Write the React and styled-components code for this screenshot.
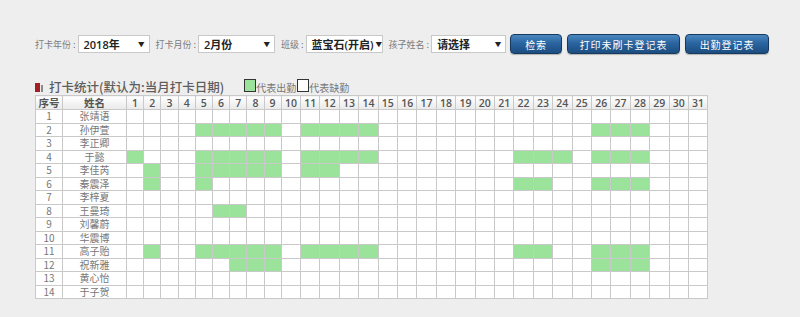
import React from 'react';
import styled, { createGlobalStyle } from 'styled-components';

const GlobalStyle = createGlobalStyle`
  html, body {
    margin: 0;
    padding: 0;
    background: #eeeeee;
  }
  body {
    font-family: "Noto Sans CJK SC", "Open Sans", sans-serif;
  }
`;

const Page = styled.div`
  width: 800px;
  height: 317px;
  box-sizing: border-box;
  padding: 34px 0 0 35px;
  background: #eeeeee;
  overflow: hidden;
`;

const Toolbar = styled.div`
  display: flex;
  align-items: center;
  height: 20px;
`;

const FieldLabel = styled.span`
  font-size: 9px;
  color: #7a7a7a;
  margin: 0 2px 0 ${p => p.first ? 0 : 6}px;
  white-space: nowrap;
`;

const SelectBox = styled.div`
  width: ${p => p.w}px;
  height: 18px;
  box-sizing: border-box;
  border: 1px solid #c8c8c8;
  background: #fff;
  display: flex;
  align-items: center;
  justify-content: space-between;
  padding: 0 4px 0 5px;
  font-family: "Open Sans", "Noto Sans CJK SC", sans-serif;
  font-size: 11px;
  font-weight: 600;
  color: #222;
  white-space: nowrap;
  overflow: hidden;
`;

const Arrow = styled.span`
  font-size: 6.5px;
  color: #222;
  margin-left: 2px;
`;

const Button = styled.button`
  width: ${p => p.w}px;
  height: 20px;
  margin-left: ${p => p.ml}px;
  box-sizing: border-box;
  border: 1px solid #163a5e;
  border-radius: 4px;
  background: linear-gradient(#4b87bf 0%, #2a65a0 45%, #1c4d80 100%);
  box-shadow: 0 1px 1px rgba(0, 0, 0, 0.25);
  color: #fff;
  font-family: "Noto Sans CJK SC", sans-serif;
  font-size: 10px;
  letter-spacing: 1px;
  padding: 0;
  white-space: nowrap;
  cursor: pointer;
`;

const TitleRow = styled.div`
  display: flex;
  align-items: center;
  margin-top: 25px;
  height: 16px;
`;

const Marker = styled.span`
  display: inline-block;
  width: 5px;
  height: 9px;
  background: #a31f24;
  margin-right: 1px;
  margin-top: 1px;
`;

const MarkerBar = styled.span`
  display: inline-block;
  width: 2px;
  height: 7px;
  background: #8a8a8a;
  margin-right: 6px;
  margin-top: 2px;
`;

const Title = styled.span`
  font-size: 12.5px;
  color: #5e5e5e;
  font-weight: 500;
  white-space: nowrap;
  margin-right: 20px;
  margin-top: -2px;
`;

const LegendBox = styled.span`
  display: inline-block;
  width: 10px;
  height: 11px;
  border: 1px solid #333;
  background: ${p => p.on ? '#9be39a' : '#fff'};
  margin-top: -4px;
`;

const LegendText = styled.span`
  font-size: 10px;
  color: #777;
  margin-right: 1px;
  white-space: nowrap;
`;

const Table = styled.table`
  border-collapse: collapse;
  table-layout: fixed;
  width: 673px;
  background: #fff;
`;

const Th = styled.th`
  height: 13px;
  padding: 0;
  border: 1px solid #c9c9c9;
  background: linear-gradient(#ffffff, #e9e9e9);
  font-family: "Open Sans", "Noto Sans CJK SC", sans-serif;
  font-size: 10.5px;
  font-weight: 600;
  color: #555;
  text-align: center;
  line-height: 12px;
`;

const Td = styled.td`
  height: 12.5px;
  padding: 0;
  border: 1px solid #c9c9c9;
  background: ${p => p.on ? '#9be39a' : '#fff'};
  font-size: 10px;
  color: #777;
  text-align: center;
  line-height: 12px;
`;

const students = [
  ['张靖语', []],
  ['孙伊萱', [5, 6, 7, 8, 9, 11, 12, 13, 14, 26, 27, 28]],
  ['李正卿', []],
  ['于懿', [1, 5, 6, 7, 8, 9, 11, 12, 13, 14, 22, 23, 24, 26, 27, 28]],
  ['李佳芮', [2, 5, 6, 7, 8, 9, 11, 12]],
  ['秦震泽', [2, 5, 22, 23, 26, 27, 28]],
  ['李梓夏', []],
  ['王曼琦', [6, 7]],
  ['刘馨蔚', []],
  ['华震博', []],
  ['高子贻', [2, 5, 6, 7, 8, 9, 11, 12, 13, 14, 22, 23, 26, 27, 28]],
  ['祝新雅', [7, 8, 9, 26, 27, 28]],
  ['黄心怡', []],
  ['于子贺', []],
];

const days = Array.from({ length: 31 }, (_, i) => i + 1);

export default function App() {
  return (
    <Page>
      <GlobalStyle />
      <Toolbar>
        <FieldLabel first>打卡年份 :</FieldLabel>
        <SelectBox w={72}><span>2018年</span><Arrow>▼</Arrow></SelectBox>
        <FieldLabel>打卡月份 :</FieldLabel>
        <SelectBox w={77}><span>2月份</span><Arrow>▼</Arrow></SelectBox>
        <FieldLabel>班级 :</FieldLabel>
        <SelectBox w={77}><span>蓝宝石(开启)</span><Arrow>▼</Arrow></SelectBox>
        <FieldLabel>孩子姓名 :</FieldLabel>
        <SelectBox w={75}><span>请选择</span><Arrow>▼</Arrow></SelectBox>
        <Button w={52} ml={4}>检索</Button>
        <Button w={113} ml={5}>打印未刷卡登记表</Button>
        <Button w={84} ml={5}>出勤登记表</Button>
      </Toolbar>

      <TitleRow>
        <Marker />
        <MarkerBar />
        <Title>打卡统计(默认为:当月打卡日期)</Title>
        <LegendBox on />
        <LegendText>代表出勤</LegendText>
        <LegendBox />
        <LegendText>代表缺勤</LegendText>
      </TitleRow>

      <Table>
        <colgroup>
          <col style={{ width: 27 }} />
          <col style={{ width: 64 }} />
          {days.map(d => (
            <col key={d} style={{ width: d < 10 ? 17.2 : 19.4 }} />
          ))}
        </colgroup>
        <thead>
          <tr>
            <Th>序号</Th>
            <Th>姓名</Th>
            {days.map(d => <Th key={d}>{d}</Th>)}
          </tr>
        </thead>
        <tbody>
          {students.map(([name, present], i) => (
            <tr key={name}>
              <Td>{i + 1}</Td>
              <Td>{name}</Td>
              {days.map(d => <Td key={d} on={present.includes(d)} />)}
            </tr>
          ))}
        </tbody>
      </Table>
    </Page>
  );
}
